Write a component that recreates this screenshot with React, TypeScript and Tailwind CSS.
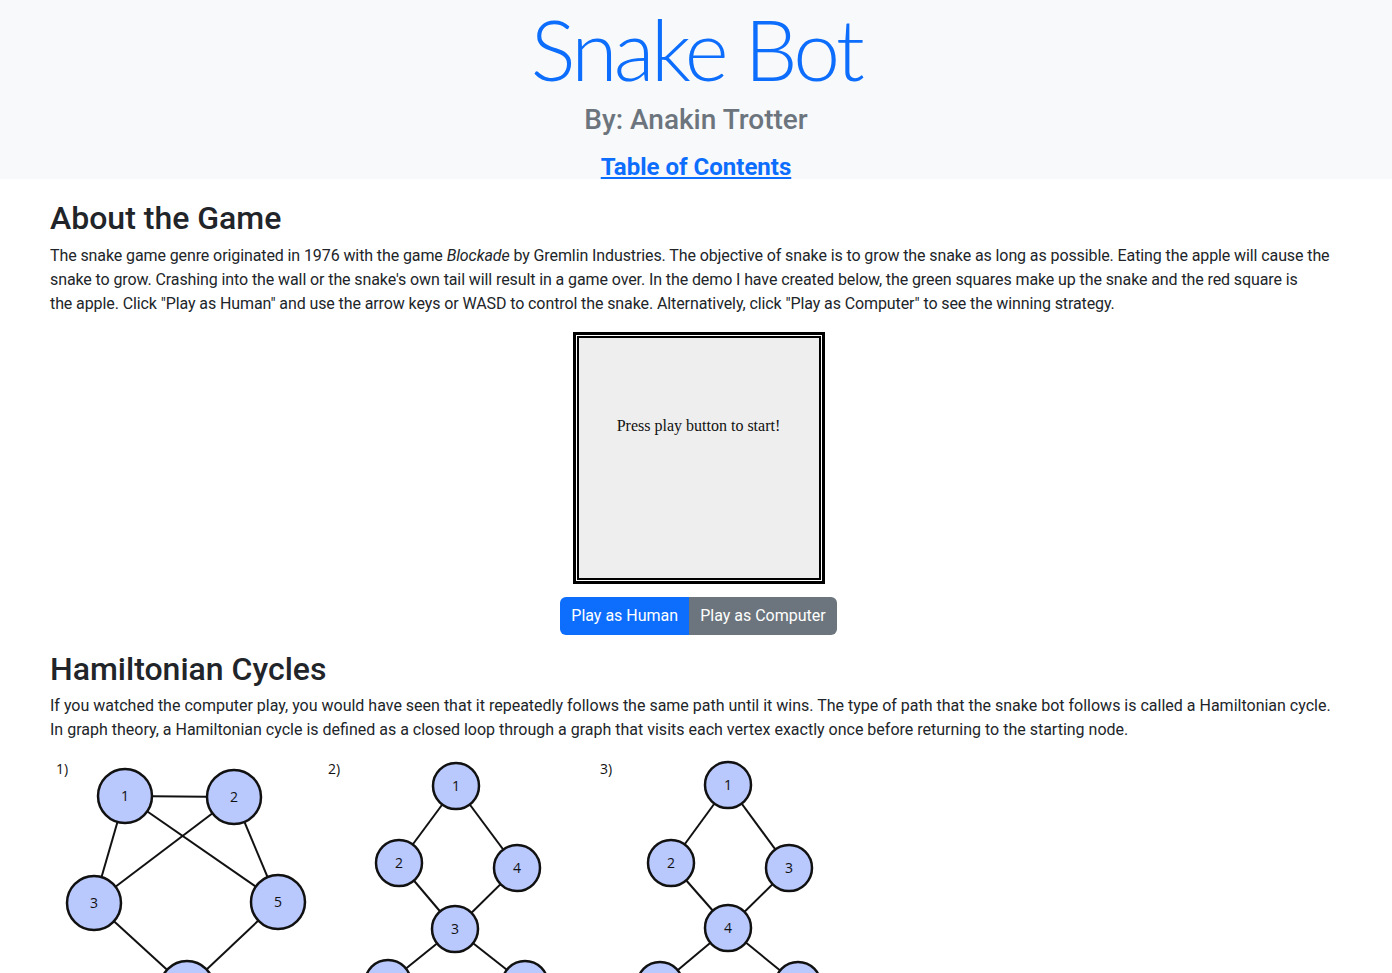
import React from "react";

type Node = { id: string; x: number; y: number };

function Graph({
  label,
  nodes,
  edges,
  r,
}: {
  label: string;
  nodes: Node[];
  edges: [string, string][];
  r: number;
}) {
  const map: Record<string, Node> = {};
  nodes.forEach((n) => (map[n.id] = n));
  return (
    <svg width={272} height={270} viewBox="0 0 272 270" className="block shrink-0">
      <text x={8} y={16} fontSize={14} fontFamily="'Open Sans', sans-serif" fill="#111">
        {label}
      </text>
      {edges.map(([a, b], i) => (
        <line
          key={i}
          x1={map[a].x}
          y1={map[a].y}
          x2={map[b].x}
          y2={map[b].y}
          stroke="#111"
          strokeWidth={2}
        />
      ))}
      {nodes.map((n) => (
        <g key={n.id}>
          <circle cx={n.x} cy={n.y} r={r} fill="#b9c8fd" stroke="#111" strokeWidth={2.5} />
          <text
            x={n.x}
            y={n.y + 5}
            textAnchor="middle"
            fontSize={14}
            fontFamily="'Open Sans', sans-serif"
            fill="#111"
          >
            {n.id}
          </text>
        </g>
      ))}
    </svg>
  );
}

export default function App() {
  const font = { fontFamily: "Roboto, 'Noto Sans', 'Liberation Sans', Arial, sans-serif" };
  return (
    <div className="min-h-screen bg-white text-[#212529] text-[16px]" style={font}>
      <header className="bg-[#f8f9fa] h-[179px] text-center flex flex-col items-center">
        <h1
          className="text-[84px] font-light leading-[98px] tracking-[-3.5px] text-[#0d6efd] m-0"
          style={{ fontFamily: "Lato, Roboto, sans-serif" }}
        >
          Snake Bot
        </h1>
        <h3 className="mt-[6px] text-[28px] font-medium leading-[32px] text-[#6c757d]">By: Anakin Trotter</h3>
        <a href="#" className="mt-[19px] text-[24px] font-bold leading-[24px] text-[#0d6efd] underline">
          Table of Contents
        </a>
      </header>
      <main className="mx-auto w-[1320px] px-3">
        <h2 className="mt-[20px] mb-[7px] text-[32px] font-medium leading-[38px] pl-[2px]">About the Game</h2>
        <p className="leading-[24px] mb-4 tracking-[-0.1px] pl-[2px] whitespace-nowrap">
          The snake game genre originated in 1976 with the game <em>Blockade</em> by Gremlin Industries. The
          objective of snake is to grow the snake as long as possible. Eating the apple will cause the
          <br />
          snake to grow. Crashing into the wall or the snake's own tail will result in a game over. In the demo I
          have created below, the green squares make up the snake and the red square is
          <br />
          the apple. Click "Play as Human" and use the arrow keys or WASD to control the snake. Alternatively, click
          "Play as Computer" to see the winning strategy.
        </p>
        <div className="flex justify-center pl-[5px]">
          <div className="border-[3px] border-black bg-white p-px">
            <div className="border-2 border-black bg-[#eeeeee] w-[244px] h-[244px] flex justify-center pt-[78px]">
              <span
                className="text-[16px] leading-[20px] text-[#111]"
                style={{ fontFamily: "'Liberation Serif', 'Times New Roman', serif" }}
              >
                Press play button to start!
              </span>
            </div>
          </div>
        </div>
        <div className="flex justify-center mt-[13px] pl-[5px]">
          <div className="flex">
            <button className="bg-[#0d6efd] text-white px-[11px] h-[38px] rounded-l-[6px] text-[16px] leading-[24px] whitespace-nowrap">
              Play as Human
            </button>
            <button className="bg-[#6c757d] text-white px-[11px] h-[38px] rounded-r-[6px] text-[16px] leading-[24px] whitespace-nowrap">
              Play as Computer
            </button>
          </div>
        </div>
        <h2 className="mt-[15px] mb-[6px] text-[32px] font-medium leading-[38px] pl-[2px]">Hamiltonian Cycles</h2>
        <p className="leading-[24px] mb-4 pl-[2px] whitespace-nowrap">
          If you watched the computer play, you would have seen that it repeatedly follows the same path until it
          wins. The type of path that the snake bot follows is called a Hamiltonian cycle.
          <br />
          In graph theory, a Hamiltonian cycle is defined as a closed loop through a graph that visits each vertex
          exactly once before returning to the starting node.
        </p>
        <div className="flex">
          <Graph
            label="1)"
            r={27}
            nodes={[
              { id: "1", x: 77, y: 38 },
              { id: "2", x: 186, y: 39 },
              { id: "3", x: 46, y: 145 },
              { id: "5", x: 230, y: 144 },
              { id: "4", x: 139, y: 230 },
            ]}
            edges={[
              ["1", "2"],
              ["1", "3"],
              ["1", "5"],
              ["2", "3"],
              ["2", "5"],
              ["3", "4"],
              ["5", "4"],
            ]}
          />
          <Graph
            label="2)"
            r={23}
            nodes={[
              { id: "1", x: 136, y: 28 },
              { id: "2", x: 79, y: 105 },
              { id: "4", x: 197, y: 110 },
              { id: "3", x: 135, y: 171 },
              { id: "5", x: 68, y: 225 },
              { id: "6", x: 205, y: 226 },
            ]}
            edges={[
              ["1", "2"],
              ["1", "4"],
              ["2", "3"],
              ["4", "3"],
              ["3", "5"],
              ["3", "6"],
            ]}
          />
          <Graph
            label="3)"
            r={23}
            nodes={[
              { id: "1", x: 136, y: 27 },
              { id: "2", x: 79, y: 105 },
              { id: "3", x: 197, y: 110 },
              { id: "4", x: 136, y: 170 },
              { id: "5", x: 68, y: 227 },
              { id: "6", x: 206, y: 227 },
            ]}
            edges={[
              ["1", "2"],
              ["1", "3"],
              ["2", "4"],
              ["3", "4"],
              ["4", "5"],
              ["4", "6"],
            ]}
          />
        </div>
      </main>
    </div>
  );
}
